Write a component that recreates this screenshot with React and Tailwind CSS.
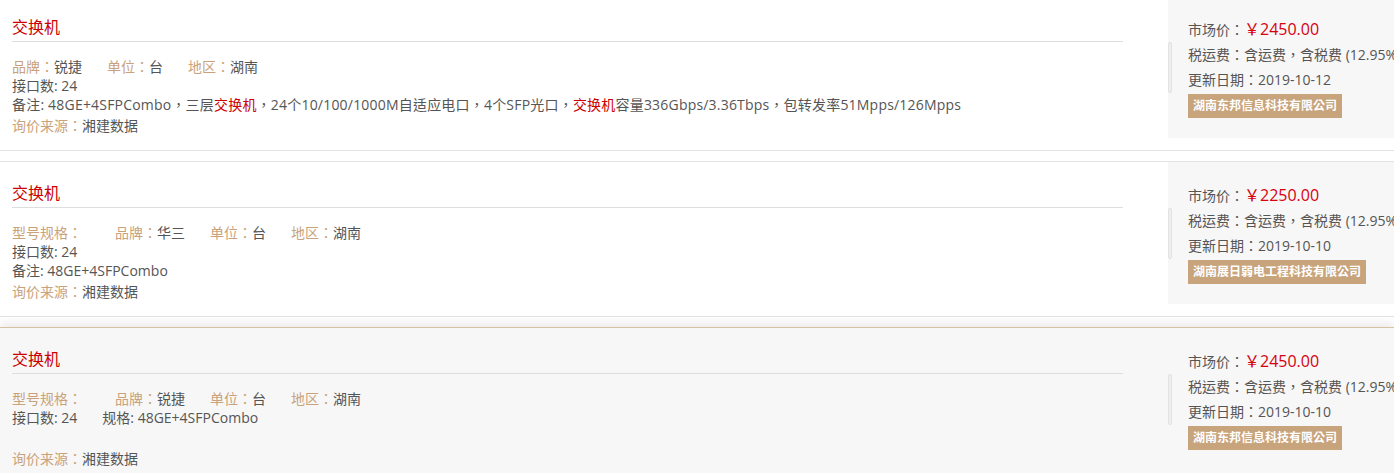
import React from "react";

const FONT = { fontFamily: '"Open Sans", "Noto Sans CJK TC", "Noto Sans CJK SC", sans-serif' };

function Label({ children }) {
  return <span className="text-[#c9a27c]">{children}</span>;
}

function Panel({ price, date, company }) {
  return (
    <div className="relative w-[260px] flex-none h-[142px] bg-[#f7f7f7] pl-[20px] pt-[21px]">
      <div className="absolute left-0 top-[46px] h-[51px] w-[4px] rounded-sm border border-[#e2e2e2] bg-[#efefef]" />
      <div className="text-[14px] leading-[25px] text-[#555] whitespace-nowrap">
        市场价：<span className="text-[16px] text-[#d8000f]">￥2{price}</span>
      </div>
      <div className="text-[14px] leading-[25px] text-[#555] whitespace-nowrap">
        税运费：含运费，含税费 (12.95%)
      </div>
      <div className="text-[14px] leading-[25px] text-[#555] whitespace-nowrap">
        更新日期：{date}
      </div>
      <div className="mt-[1px] inline-block h-[24px] bg-[#c8a47c] px-[5px] text-[12px] leading-[24px] font-bold text-white whitespace-nowrap">
        {company}
      </div>
    </div>
  );
}

function Card({ className = "", hovered = false, lines, price, date, company }) {
  return (
    <div
      className={`flex h-[156px] border-y ${
        hovered
          ? "border-t-[#d8c0a0] border-b-[#e3e3e3] bg-[#f7f7f7] shadow-[0_-5px_8px_rgba(0,0,0,0.07)]"
          : "border-[#e3e3e3] bg-white"
      } ${className}`}
    >
      <div className="w-[1168px] flex-none pl-[12px] pr-[45px]">
        <div className="pt-[19px] pb-[2px] border-b border-[#dedede]">
          <div className="text-[16px] leading-[24px] text-[#cc0000]">交换机</div>
        </div>
        <div className="mt-[15px] text-[14px] leading-[19px] text-[#555]">{lines}</div>
      </div>
      <Panel price={price} date={date} company={company} />
    </div>
  );
}

export default function App() {
  return (
    <div className="w-[1394px] h-[473px] overflow-hidden bg-white" style={FONT}>
      <Card
        className="-mt-[5px] mb-[10px]"
        price="450.00"
        date="2019-10-12"
        company="湖南东邦信息科技有限公司"
        lines={
          <>
            <div className="flex">
              <span className="mr-[25px]">
                <Label>品牌：</Label>锐捷
              </span>
              <span className="mr-[25px]">
                <Label>单位：</Label>台
              </span>
              <span>
                <Label>地区：</Label>湖南
              </span>
            </div>
            <div>接口数: 24</div>
            <div className="whitespace-nowrap tracking-[0.2px]">
              备注: 48GE+4SFPCombo，三层<span className="text-[#cc0000]">交换机</span>，24个10/100/1000M自适应电口，4个SFP光口，
              <span className="text-[#cc0000]">交换机</span>容量336Gbps/3.36Tbps，包转发率51Mpps/126Mpps
            </div>
            <div className="mt-[2px]">
              <Label>询价来源：</Label>湘建数据
            </div>
          </>
        }
      />
      <Card
        className="mb-[10px]"
        price="250.00"
        date="2019-10-10"
        company="湖南展日弱电工程科技有限公司"
        lines={
          <>
            <div className="flex">
              <span className="mr-[33px]">
                <Label>型号规格：</Label>
              </span>
              <span className="mr-[25px]">
                <Label>品牌：</Label>华三
              </span>
              <span className="mr-[25px]">
                <Label>单位：</Label>台
              </span>
              <span>
                <Label>地区：</Label>湖南
              </span>
            </div>
            <div>接口数: 24</div>
            <div>备注: 48GE+4SFPCombo</div>
            <div className="mt-[2px]">
              <Label>询价来源：</Label>湘建数据
            </div>
          </>
        }
      />
      <Card
        hovered
        price="450.00"
        date="2019-10-10"
        company="湖南东邦信息科技有限公司"
        lines={
          <>
            <div className="flex">
              <span className="mr-[33px]">
                <Label>型号规格：</Label>
              </span>
              <span className="mr-[25px]">
                <Label>品牌：</Label>锐捷
              </span>
              <span className="mr-[25px]">
                <Label>单位：</Label>台
              </span>
              <span>
                <Label>地区：</Label>湖南
              </span>
            </div>
            <div className="flex">
              <span className="mr-[25px]">接口数: 24</span>
              <span>规格: 48GE+4SFPCombo</span>
            </div>
            <div className="h-[19px]" />
            <div className="mt-[3px]">
              <Label>询价来源：</Label>湘建数据
            </div>
          </>
        }
      />
    </div>
  );
}
